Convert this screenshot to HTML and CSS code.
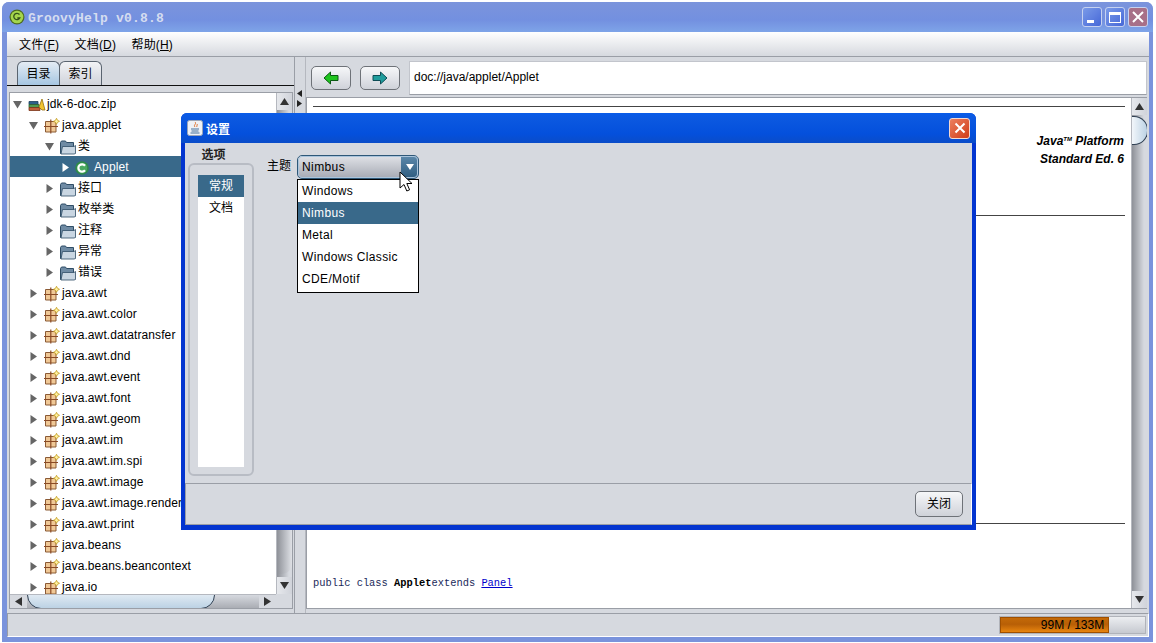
FILE: index.html
```html
<!DOCTYPE html>
<html>
	<head>
		<meta charset="UTF-8">
		<title>GroovyHelp</title>
		<link rel="stylesheet" href="styles.css">
	</head>
	<body>
	<svg class="defs" width="0" height="0">
		<symbol id="pkg" viewBox="0 0 16 16">
			<path d="M1.500 3.500h10.500v10.500H1.500z" fill="#f0c896" stroke="#8a5a35"/>
			<path d="M6.800 1.500v14M0 8.500h14" stroke="#8a4a25" fill="none" stroke-width="1.200"/>
			<path d="M12.500 .3l1 2 2 1-2 1-1 2-1-2-2-1 2-1z" fill="#fff3a0" stroke="#c49a20" stroke-width=".8"/>
		</symbol>
		<symbol id="folder" viewBox="0 0 16 16">
			<path d="M.5 14.500V3.500l1-1.500h4l1 1.500h7v11z" fill="#6f8ba4" stroke="#2f4d66"/>
			<path d="M2.500 7.500h11.500l1.500-1v8l-1.500.5H1z" fill="#c9d6e2" stroke="#2f4d66" stroke-width=".8"/>
		</symbol>
		<symbol id="cls" viewBox="0 0 14 14">
			<circle cx="7" cy="7" r="6.800" fill="#2f8a4a"/>
			<circle cx="7" cy="7" r="5.200" fill="#4aa860"/>
			<path d="M10 4.700A3.700 3.700 0 1 0 10 9.300" fill="none" stroke="#fff" stroke-width="2.200"/>
		</symbol>
		<symbol id="jar" viewBox="0 0 18 14">
			<path d="M1 3.500h9v3H1z" fill="#2c5f8a" stroke="#1b3d5c" stroke-width=".8"/>
			<path d="M1 6.500h10v3H1z" fill="#4f9a50" stroke="#2c6030" stroke-width=".8"/>
			<path d="M1 9.500h11v3H1z" fill="#c0603a" stroke="#7a3318" stroke-width=".8"/>
			<path d="M11 9l3-8 3 11h-3z" fill="#f2c430" stroke="#94700c" stroke-width=".8"/>
		</symbol>
		<symbol id="arrow-open" viewBox="0 0 9 9"><path d="M0 1h9L4.500 8.500z"/></symbol>
		<symbol id="arrow-shut" viewBox="0 0 9 9"><path d="M1.500 0v9L8 4.500z"/></symbol>
	</svg>

	<div class="window">
		<div class="titlebar">
			<svg class="app-icon" width="16" height="16" viewBox="0 0 16 16">
				<circle cx="8" cy="8" r="7.500" fill="#4c6b20"/>
				<circle cx="8" cy="8" r="6.300" fill="#a4d64c"/>
				<path d="M10.500 5.500A3.200 3.200 0 1 0 10.800 9H8.300" fill="none" stroke="#33501a" stroke-width="1.300"/>
			</svg>
			<span class="title-text">GroovyHelp v0.8.8</span>
			<div class="title-btns">
				<div class="tbtn"><i class="ic-min"></i></div>
				<div class="tbtn"><i class="ic-max"></i></div>
				<div class="tbtn tbtn-close">
					<svg width="14" height="14" viewBox="0 0 14 14"><path d="M2 2l10 10M12 2L2 12" stroke="#fff" stroke-width="2"/></svg>
				</div>
			</div>
		</div>

		<div class="menubar">
			<span>文件(<u>F</u>)</span>
			<span>文档(<u>D</u>)</span>
			<span>帮助(<u>H</u>)</span>
		</div>

		<div class="main">
			<div class="left">
				<div class="tabs">
					<div class="tab on">目录</div>
					<div class="tab">索引</div>
				</div>
				<div class="tree_wrap">
					<div class="tree">
						<div class="row lv0"><svg class="arr"><use href="#arrow-open"/></svg><svg class="ico ico_jar"><use href="#jar"/></svg>jdk-6-doc.zip</div>
						<div class="row lv1"><svg class="arr"><use href="#arrow-open"/></svg><svg class="ico"><use href="#pkg"/></svg>java.applet</div>
						<div class="row lv2"><svg class="arr"><use href="#arrow-open"/></svg><svg class="ico"><use href="#folder"/></svg>类</div>
						<div class="row lv3 sel"><svg class="arr"><use href="#arrow-shut"/></svg><svg class="ico ico_cls"><use href="#cls"/></svg>Applet</div>
						<div class="row lv2"><svg class="arr"><use href="#arrow-shut"/></svg><svg class="ico"><use href="#folder"/></svg>接口</div>
						<div class="row lv2"><svg class="arr"><use href="#arrow-shut"/></svg><svg class="ico"><use href="#folder"/></svg>枚举类</div>
						<div class="row lv2"><svg class="arr"><use href="#arrow-shut"/></svg><svg class="ico"><use href="#folder"/></svg>注释</div>
						<div class="row lv2"><svg class="arr"><use href="#arrow-shut"/></svg><svg class="ico"><use href="#folder"/></svg>异常</div>
						<div class="row lv2"><svg class="arr"><use href="#arrow-shut"/></svg><svg class="ico"><use href="#folder"/></svg>错误</div>
						<div class="row lv1"><svg class="arr"><use href="#arrow-shut"/></svg><svg class="ico"><use href="#pkg"/></svg>java.awt</div>
						<div class="row lv1"><svg class="arr"><use href="#arrow-shut"/></svg><svg class="ico"><use href="#pkg"/></svg>java.awt.color</div>
						<div class="row lv1"><svg class="arr"><use href="#arrow-shut"/></svg><svg class="ico"><use href="#pkg"/></svg>java.awt.datatransfer</div>
						<div class="row lv1"><svg class="arr"><use href="#arrow-shut"/></svg><svg class="ico"><use href="#pkg"/></svg>java.awt.dnd</div>
						<div class="row lv1"><svg class="arr"><use href="#arrow-shut"/></svg><svg class="ico"><use href="#pkg"/></svg>java.awt.event</div>
						<div class="row lv1"><svg class="arr"><use href="#arrow-shut"/></svg><svg class="ico"><use href="#pkg"/></svg>java.awt.font</div>
						<div class="row lv1"><svg class="arr"><use href="#arrow-shut"/></svg><svg class="ico"><use href="#pkg"/></svg>java.awt.geom</div>
						<div class="row lv1"><svg class="arr"><use href="#arrow-shut"/></svg><svg class="ico"><use href="#pkg"/></svg>java.awt.im</div>
						<div class="row lv1"><svg class="arr"><use href="#arrow-shut"/></svg><svg class="ico"><use href="#pkg"/></svg>java.awt.im.spi</div>
						<div class="row lv1"><svg class="arr"><use href="#arrow-shut"/></svg><svg class="ico"><use href="#pkg"/></svg>java.awt.image</div>
						<div class="row lv1"><svg class="arr"><use href="#arrow-shut"/></svg><svg class="ico"><use href="#pkg"/></svg>java.awt.image.renderable</div>
						<div class="row lv1"><svg class="arr"><use href="#arrow-shut"/></svg><svg class="ico"><use href="#pkg"/></svg>java.awt.print</div>
						<div class="row lv1"><svg class="arr"><use href="#arrow-shut"/></svg><svg class="ico"><use href="#pkg"/></svg>java.beans</div>
						<div class="row lv1"><svg class="arr"><use href="#arrow-shut"/></svg><svg class="ico"><use href="#pkg"/></svg>java.beans.beancontext</div>
						<div class="row lv1"><svg class="arr"><use href="#arrow-shut"/></svg><svg class="ico"><use href="#pkg"/></svg>java.io</div>
					</div>
					<div class="vbar">
						<div class="sb_btn"><svg class="sb_arr" viewBox="0 0 9 9"><path d="M4.500 1L9 8H0z"/></svg></div>
						<div class="vtrack"><div class="vthumb vthumb_l"></div></div>
						<div class="sb_btn"><svg class="sb_arr" viewBox="0 0 9 9"><path d="M0 1h9L4.500 8z"/></svg></div>
					</div>
					<div class="hbar">
						<div class="sb_btn_h"><svg class="sb_arr" viewBox="0 0 9 9"><path d="M8 0v9L1 4.500z"/></svg></div>
						<div class="htrack"><div class="hthumb"></div></div>
						<div class="sb_btn_h"><svg class="sb_arr" viewBox="0 0 9 9"><path d="M1 0v9L8 4.500z"/></svg></div>
					</div>
					<div class="corner"></div>
				</div>
			</div>

			<div class="splitter">
				<svg width="6" height="18" viewBox="0 0 6 18"><path d="M5 0v7L0 3.500z M0 10v7l5-3.500z" fill="#222"/></svg>
			</div>

			<div class="right">
				<div class="toolbar">
					<div class="nav_btn">
						<svg width="16" height="14" viewBox="0 0 16 14"><path d="M7.500 1L1 7l6.500 6V9.500H15v-5H7.500z" fill="#1fc41f" stroke="#0a5a12"/></svg>
					</div>
					<div class="nav_btn">
						<svg width="16" height="14" viewBox="0 0 16 14"><path d="M8.500 1L15 7l-6.500 6V9.500H1v-5h7.500z" fill="#1f9c9c" stroke="#0d4c55"/></svg>
					</div>
					<div class="addr">doc://java/applet/Applet</div>
				</div>
				<div class="doc_wrap">
					<div class="doc">
						<hr class="rule">
						<div class="doc_head">Java<sup>TM</sup> Platform<br>Standard Ed. 6</div>
						<hr class="rule rule2">
						<hr class="rule rule3">
						<div class="decl">public class <b>Applet</b>extends <a href="#">Panel</a></div>
					</div>
					<div class="vbar">
						<div class="sb_btn"><svg class="sb_arr" viewBox="0 0 9 9"><path d="M4.500 1L9 8H0z"/></svg></div>
						<div class="vtrack"><div class="vthumb vthumb_r"></div></div>
						<div class="sb_btn"><svg class="sb_arr" viewBox="0 0 9 9"><path d="M0 1h9L4.500 8z"/></svg></div>
					</div>
				</div>
			</div>
		</div>

		<div class="status">
			<div class="mem">
				<div class="mem_fill" style="width:75%"></div>
				<span class="mem_text">99M / 133M</span>
			</div>
		</div>
	</div>

	<div class="dialog">
		<div class="dlg_title">
			<svg class="dlg_icon" width="16" height="16" viewBox="0 0 16 16">
				<rect x=".5" y=".5" width="15" height="15" rx="2" fill="#eef1f6" stroke="#9aa5b8"/>
				<path d="M8 2c2 2-2 3 0 5M10 4c1 1-1 2 0 3" fill="none" stroke="#e0702a"/>
				<path d="M4 9h8M4.500 11h7M3.500 13h9" stroke="#44709c"/>
			</svg>
			<span class="dlg_name">设置</span>
			<div class="dlg_close">
				<svg width="12" height="12" viewBox="0 0 12 12"><path d="M1.500 1.500l9 9M10.500 1.500l-9 9" stroke="#fff" stroke-width="2"/></svg>
			</div>
		</div>
		<div class="dlg_body">
			<div class="dlg_main">
				<div class="opt_col">
					<div class="opt_label">选项</div>
					<div class="opt_box">
						<div class="opt_list">
							<div class="opt_item on">常规</div>
							<div class="opt_item">文档</div>
						</div>
					</div>
				</div>
				<div class="theme_row">
					<span class="theme_label">主题</span>
					<div class="combo">
						<span class="combo_val">Nimbus</span>
						<span class="combo_btn"><svg width="8" height="6" viewBox="0 0 8 6"><path d="M0 0h8L4 6z" fill="#fff"/></svg></span>
					</div>
				</div>
			</div>
			<div class="dlg_foot">
				<div class="close_btn">关闭</div>
			</div>
		</div>
	</div>

	<div class="popup">
		<div class="pop_item">Windows</div>
		<div class="pop_item on">Nimbus</div>
		<div class="pop_item">Metal</div>
		<div class="pop_item">Windows Classic</div>
		<div class="pop_item">CDE/Motif</div>
	</div>

	<svg class="cursor" width="16" height="22" viewBox="0 0 16 22">
		<path d="M1 1v16l4-3.500 2.800 6.500 2.800-1.200L7.800 12.500H13z" fill="#fff" stroke="#000"/>
	</svg>
	</body>
</html>
```

FILE: styles.css
```css
*{
	padding: 0;
	margin: 0;
	box-sizing: border-box;
}
body{
	position: relative;
	width: 1156px;
	height: 643px;
	overflow: hidden;
	background: #fff;
	font: 12px "Liberation Sans", "Noto Sans CJK SC", sans-serif;
	color: #000;
}
.defs{
	position: absolute;
}
.window{
	position: absolute;
	left: 2px;
	top: 2px;
	width: 1151px;
	height: 640px;
	padding: 0 4px 5px 5px;
	display: flex;
	flex-direction: column;
	background: #7a93dc;
	border-radius: 7px 7px 0 0;
}
.titlebar{
	height: 30px;
	flex: none;
	display: flex;
	align-items: center;
	margin: 0 -4px 0 -5px;
	padding: 0 5px 0 7px;
	background: linear-gradient(#7b94dc, #7390e0 60%, #7ea4e8);
	border-radius: 7px 7px 0 0;
}
.app-icon{
	margin-right: 3px;
}
.title-text{
	font: bold 13px "Liberation Mono", monospace;
	letter-spacing: .2px;
	color: #d5ddf0;
	padding-top: 2px;
}
.title-btns{
	margin-left: auto;
	display: flex;
	gap: 3px;
}
.tbtn{
	width: 20px;
	height: 20px;
	border: 1px solid #c6d2f0;
	border-radius: 3px;
	background: linear-gradient(135deg, #7a9ae8, #4668d8);
	position: relative;
	display: flex;
	align-items: center;
	justify-content: center;
}
.tbtn-close{
	background: #a87088;
}
.ic-min{
	position: absolute;
	left: 4px;
	bottom: 3px;
	width: 7px;
	height: 3px;
	background: #fff;
}
.ic-max{
	width: 12px;
	height: 11px;
	border: 1px solid #fff;
	border-top-width: 3px;
}
.menubar{
	height: 25px;
	flex: none;
	display: flex;
	gap: 15.500px;
	align-items: center;
	padding: 0 0 2px 12px;
	letter-spacing: .15px;
	background: linear-gradient(#fff, #d6d9df);
	border-bottom: 1px solid #9a9ea6;
}
.main{
	height: 556px;
	flex: none;
	display: flex;
	background: #d6d9df;
}
.left{
	width: 287px;
	padding: 4px 1px 0 2px;
}
.tabs{
	height: 25px;
	margin-left: -2px;
	padding-left: 10px;
	display: flex;
	border-bottom: 1px solid #111;
	margin-right: -1px;
}
.tab{
	width: 43px;
	height: 24px;
	text-align: center;
	line-height: 24px;
	border: 1px solid #5a6470;
	border-bottom: none;
	border-radius: 6px 6px 0 0;
	background: linear-gradient(#f2f3f6, #d0d3da);
	margin-right: -1px;
}
.tab.on{
	background: linear-gradient(#e4ecf4, #a6c6e2);
	position: relative;
}
.tree_wrap{
	margin-top: 6px;
	height: 517px;
	border: 1px solid #9a9ea6;
	display: grid;
	grid-template-columns: 266px 16px;
	grid-template-rows: 501px 14px;
	background: #d6d9df;
}
.tree{
	background: #fff;
	overflow: hidden;
}
.row{
	height: 21px;
	padding-top: 2px;
	display: flex;
	align-items: center;
	white-space: nowrap;
	line-height: 19px;
	letter-spacing: .1px;
}
.row.sel{
	background: #39698a;
	color: #fff;
}
.lv0{ padding-left: 3px; }
.lv1{ padding-left: 19px; }
.lv2{ padding-left: 35px; }
.lv3{ padding-left: 51px; }
.arr{
	width: 9px;
	height: 9px;
	fill: #666;
	margin-right: 6px;
	flex: none;
}
.sel .arr{
	fill: #fff;
}
.ico{
	width: 16px;
	height: 16px;
	margin-right: 2px;
	flex: none;
}
.ico_jar{
	width: 18px;
	height: 14px;
	margin-right: 1px;
}
.ico_cls{
	width: 14px;
	height: 14px;
	margin-right: 5px;
	margin-left: -1px;
}
.vbar{
	display: flex;
	flex-direction: column;
	border-left: 1px solid #b5b8bf;
	background: #d6d9df;
}
.sb_btn{
	height: 17px;
	flex: none;
	display: flex;
	align-items: center;
	justify-content: center;
	background: linear-gradient(90deg, #e6e8ec, #d0d3da);
}
.sb_arr{
	width: 9px;
	height: 9px;
	fill: #333;
}
.vtrack{
	flex: 1;
	background: linear-gradient(90deg, #8e9198, #d6d9df 80%);
	position: relative;
	overflow: hidden;
}
.vthumb{
	position: absolute;
	left: 0;
	right: -1px;
	border: 1px solid #2f3f52;
	border-right: none;
	border-radius: 0 14px 14px 0;
	background: linear-gradient(90deg, #f2f6fa, #bcd2e4);
}
.vthumb_l{
	top: 4px;
	height: 460px;
	right: 0;
	border: none;
	border-radius: 0 0 10px 0;
	background: linear-gradient(90deg, #8e9198, #dfe1e6);
}
.vthumb_r{
	top: 1px;
	height: 29px;
	border-radius: 0 14px 14px 0;
	border-left: none;
	border-right: 1px solid #2f3f52;
}
.hbar{
	display: flex;
	background: #d6d9df;
	border-top: 1px solid #b5b8bf;
}
.sb_btn_h{
	width: 17px;
	display: flex;
	align-items: center;
	justify-content: center;
}
.htrack{
	flex: 1;
	background: linear-gradient(#d6d9df, #aaadb4);
	position: relative;
	overflow: hidden;
}
.hthumb{
	position: absolute;
	left: 0;
	top: -8px;
	width: 188px;
	height: 22px;
	border: 1px solid #2f3f52;
	border-radius: 0 0 14px 14px;
	background: linear-gradient(#f2f6fa, #bcd2e4);
}
.corner{
	background: #d6d9df;
}
.splitter{
	width: 12px;
	border-left: 1px solid #9a9ea6;
	border-right: 1px solid #b5b8bf;
	display: flex;
	align-items: flex-start;
	justify-content: center;
	padding-top: 33px;
}
.right{
	flex: 1;
	padding: 4px 2px 4px 0;
	display: flex;
	flex-direction: column;
}
.toolbar{
	height: 34px;
	flex: none;
	display: flex;
	align-items: center;
	gap: 9px;
	padding-left: 5px;
}
.nav_btn{
	width: 40px;
	height: 24px;
	border: 1px solid #6e7278;
	border-radius: 5px;
	background: linear-gradient(#f6f7f9, #cfd2d9);
	display: flex;
	align-items: center;
	justify-content: center;
}
.addr{
	flex: 1;
	height: 34px;
	background: #fff;
	border: 1px solid #c2c5cc;
	border-bottom-color: #9a9ea6;
	line-height: 30px;
	padding-left: 4px;
}
.doc_wrap{
	margin-top: 2px;
	height: 512px;
	flex: none;
	display: flex;
	border: 1px solid #9a9ea6;
	border-right: none;
}
.doc{
	flex: 1;
	background: #fff;
	padding: 8px 6px 0;
}
.doc_wrap .vbar{
	width: 16px;
}
.rule{
	border: none;
	border-top: 1px solid #444;
}
.doc_head{
	font-weight: bold;
	font-style: italic;
	text-align: right;
	line-height: 18px;
	margin-top: 25px;
	padding-right: 1px;
}
.doc_head sup{
	font-size: 6px;
	vertical-align: 4px;
	line-height: 0;
}
.rule2{
	margin-top: 47px;
}
.rule3{
	margin-top: 307px;
}
.decl{
	margin-top: 53px;
	font: 10.400px "Liberation Mono", monospace;
	color: #1a2a5a;
}
.decl b{
	color: #000;
}
.decl a{
	color: #00c;
}
.status{
	height: 24px;
	flex: none;
	border: 1px solid #9a9ea6;
	border-right-color: #fff;
	border-bottom-color: #fff;
	background: #d6d9df;
	display: flex;
	align-items: center;
	justify-content: flex-end;
	padding-right: 2px;
}
.mem{
	width: 147px;
	height: 18px;
	position: relative;
	border: 1px solid #b0b3ba;
	background: linear-gradient(#eceef1, #c6c9d0);
	text-align: center;
	line-height: 16px;
}
.mem_fill{
	position: absolute;
	left: 0;
	top: 0;
	bottom: 0;
	background: linear-gradient(#c46a08, #b85f06 45%, #e8850f);
	border: 1px solid #a05000;
}
.mem_text{
	position: relative;
}
.dialog{
	position: absolute;
	left: 181px;
	top: 113px;
	width: 795px;
	height: 417px;
	display: flex;
	flex-direction: column;
	padding: 0 4px 5px;
	background: #0335d0;
	border-radius: 6px 6px 0 0;
}
.dlg_title{
	height: 30px;
	flex: none;
	margin: 0 -4px;
	padding: 0 6px 0 6px;
	display: flex;
	align-items: center;
	background: linear-gradient(#0a5ce8, #0b58e0 20%, #0450dc 70%, #0a4cc8);
	border-radius: 6px 6px 0 0;
}
.dlg_name{
	margin-left: 3px;
	font-weight: bold;
	color: #fff;
}
.dlg_close{
	margin-left: auto;
	width: 21px;
	height: 21px;
	border: 1px solid #f4d8d0;
	border-radius: 3px;
	background: linear-gradient(135deg, #ec8060, #d03c18);
	display: flex;
	align-items: center;
	justify-content: center;
}
.dlg_body{
	flex: 1;
	display: flex;
	flex-direction: column;
	background: #d6d9df;
}
.dlg_main{
	flex: 1;
	display: flex;
	padding: 3px 0 0 3px;
}
.opt_col{
	width: 66px;
}
.opt_label{
	text-align: center;
	height: 17px;
	line-height: 19px;
	padding-right: 15px;
	color: #222;
	font-weight: bold;
}
.opt_box{
	height: 313px;
	border: 2px solid #b8bcc4;
	border-radius: 6px;
	padding: 10px 8px 7px;
}
.opt_list{
	height: 100%;
	background: #fff;
}
.opt_item{
	height: 22px;
	line-height: 22px;
	text-align: center;
}
.opt_item + .opt_item{
	line-height: 23px;
}
.opt_item.on{
	background: #39698a;
	color: #fff;
}
.theme_row{
	margin: 9px 0 0 13px;
	display: flex;
	align-items: center;
	height: 24px;
}
.theme_label{
	width: 30px;
	line-height: 22px;
	padding-bottom: 2px;
}
.combo{
	width: 122px;
	height: 24px;
	display: flex;
	border: 1px solid #2f5878;
	border-radius: 5px;
	overflow: hidden;
	background: linear-gradient(#e0e2e7, #a6aab4);
	outline: 1px solid #a9c4dc;
	outline-offset: -2px;
}
.combo_val{
	flex: 1;
	line-height: 22px;
	padding-left: 4px;
	letter-spacing: .4px;
}
.combo_btn{
	width: 17px;
	background: linear-gradient(#5c88aa, #2f5d80);
	display: flex;
	align-items: center;
	justify-content: center;
}
.dlg_foot{
	height: 42px;
	flex: none;
	border-top: 1px solid #9a9ea6;
	border-bottom: 1px solid #9a9ea6;
	border-left: 1px solid #9a9ea6;
	border-right: 1px solid #fff;
	display: flex;
	align-items: center;
	justify-content: flex-end;
	padding-right: 8px;
}
.close_btn{
	width: 48px;
	height: 26px;
	border: 1px solid #6e7278;
	border-radius: 5px;
	background: linear-gradient(#f6f7f9, #cfd2d9);
	text-align: center;
	line-height: 24px;
}
.popup{
	position: absolute;
	left: 297px;
	top: 179px;
	width: 122px;
	height: 114px;
	background: #fff;
	border: 1px solid #000;
}
.pop_item{
	height: 22px;
	line-height: 22px;
	padding-left: 4px;
	letter-spacing: .35px;
}
.pop_item.on{
	background: #39698a;
	color: #fff;
}
.cursor{
	position: absolute;
	left: 399px;
	top: 171px;
}
```
